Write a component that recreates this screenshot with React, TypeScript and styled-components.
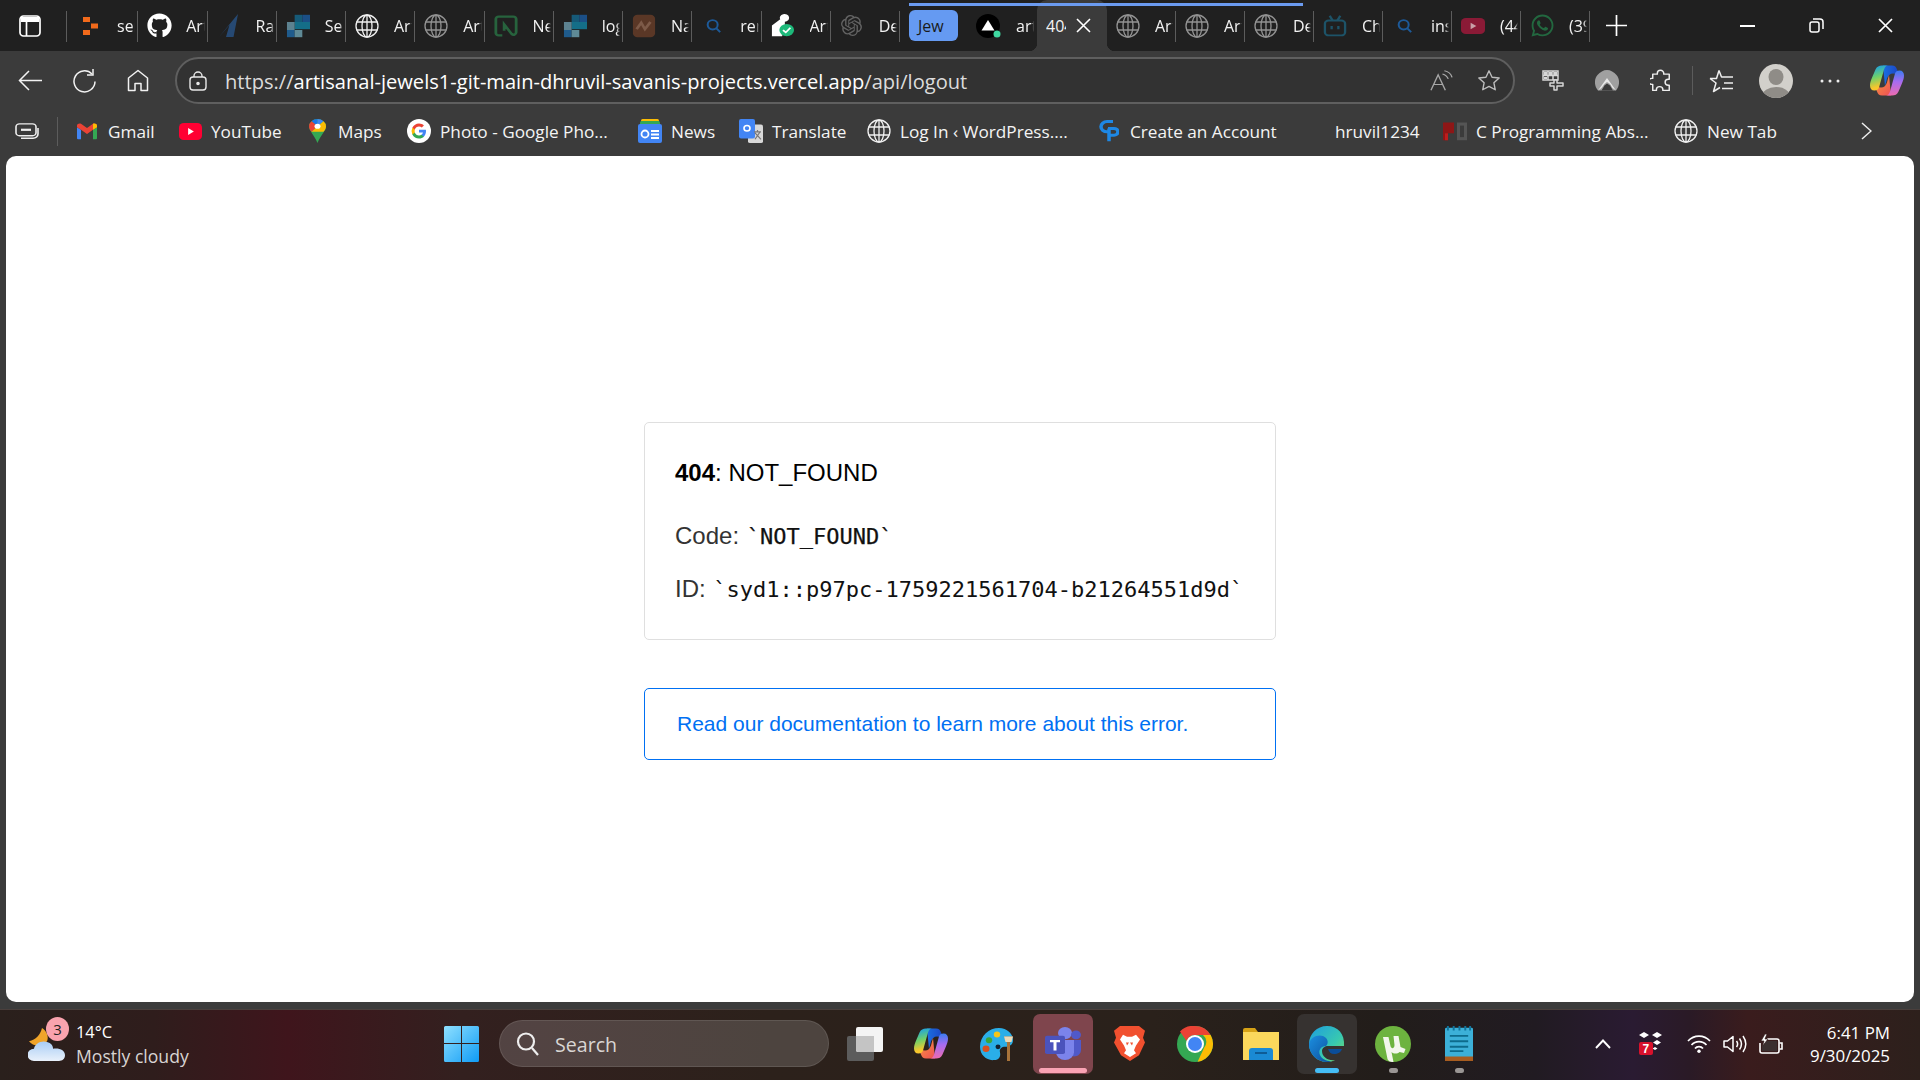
import React from "react";
import styled, { createGlobalStyle } from "styled-components";
import { FaGithub, FaWhatsapp } from "react-icons/fa";
import { SiOpenai } from "react-icons/si";

const Global = createGlobalStyle`
  html, body { margin: 0; padding: 0; width: 1920px; height: 1080px; overflow: hidden; background: #3b3b3b; }
  #root { width: 1920px; height: 1080px; }
  * { box-sizing: border-box; }
`;

const UI = `"Open Sans", "Noto Sans", sans-serif`;

const Screen = styled.div`
  width: 1920px;
  height: 1080px;
  display: flex;
  flex-direction: column;
  font-family: ${UI};
  background: #3b3b3b;
  color: #fff;
`;

/* ---------- tab strip ---------- */
const TabStrip = styled.div`
  height: 51px;
  flex: none;
  background: #202020;
  display: flex;
  align-items: stretch;
`;
const SideToggle = styled.div`
  width: 69px;
  flex: none;
  display: flex;
  align-items: center;
  padding-left: 19px;
  position: relative;
  &::after {
    content: "";
    position: absolute;
    right: 2px;
    top: 11px;
    height: 31px;
    width: 1px;
    background: #5c5c5c;
  }
`;
const Tab = styled.div<{ $w?: number; $plain?: boolean }>`
  width: ${(p) => p.$w ?? 69.25}px;
  flex: none;
  display: flex;
  align-items: center;
  padding-left: 8px;
  position: relative;
  overflow: hidden;
  &::after {
    content: "";
    display: ${(p) => (p.$plain ? "none" : "block")};
    position: absolute;
    right: 0;
    top: 11px;
    height: 31px;
    width: 1px;
    background: #5c5c5c;
  }
`;
const FavSlot = styled.span<{ $dim?: boolean }>`
  width: 26px;
  height: 26px;
  flex: none;
  display: flex;
  align-items: center;
  justify-content: center;
  opacity: ${(p) => (p.$dim ? 0.55 : 1)};
`;
const TabLabel = styled.span`
  margin-left: 14px;
  margin-right: 3px;
  font-size: 16px;
  color: #f2f2f2;
  white-space: nowrap;
  overflow: hidden;
  flex: 1;
  min-width: 0;
  -webkit-mask-image: linear-gradient(to right, #000 82%, transparent 100%);
  mask-image: linear-gradient(to right, #000 82%, transparent 100%);
`;
const Group = styled.div`
  display: flex;
  margin-left: 9px;
  position: relative;
  &::before {
    content: "";
    position: absolute;
    left: 0;
    right: 11px;
    top: 3px;
    height: 3px;
    background: #6b9bf0;
    z-index: 2;
  }
`;
const GroupChip = styled.div`
  width: 49px;
  height: 31px;
  margin-top: 10px;
  background: #659af2;
  border-radius: 6px;
  color: #1a1a1a;
  font-size: 16px;
  line-height: 33px;
  padding-left: 9px;
  flex: none;
  overflow: hidden;
`;
const ActiveTab = styled.div`
  width: 70px;
  flex: none;
  background: #3b3b3b;
  border-radius: 10px 10px 0 0;
  display: flex;
  align-items: center;
  padding-left: 9px;
  position: relative;
  font-size: 16px;
  &::before, &::after {
    content: "";
    position: absolute;
    bottom: 0;
    width: 8px;
    height: 8px;
  }
  &::before { left: -8px; background: radial-gradient(circle at 0 0, transparent 8px, #3b3b3b 8.5px); }
  &::after { right: -8px; background: radial-gradient(circle at 100% 0, transparent 8px, #3b3b3b 8.5px); }
`;
const ActiveLabel = styled.span`
  width: 20px;
  overflow: hidden;
  white-space: nowrap;
  color: #f4f4f4;
`;
const CloseX = styled.span`
  margin-left: 10px;
  display: flex;
`;
const NewTab = styled.div`
  width: 52px;
  flex: none;
  display: flex;
  align-items: center;
  justify-content: center;
`;
const StripSpacer = styled.div`
  flex: 1;
`;
const WinBtn = styled.div`
  width: 69px;
  flex: none;
  display: flex;
  align-items: center;
  justify-content: center;
`;

/* ---------- toolbar ---------- */
const Toolbar = styled.div`
  height: 57px;
  flex: none;
  display: flex;
  align-items: flex-start;
  padding: 6px 0 0 3px;
  background: #3b3b3b;
`;
const ToolBtn = styled.div<{ $w?: number }>`
  width: ${(p) => p.$w ?? 54}px;
  height: 47px;
  flex: none;
  display: flex;
  align-items: center;
  justify-content: center;
`;
const AddressBar = styled.div`
  width: 1340px;
  height: 47px;
  margin: 0 10.5px 0 10px;
  flex: none;
  border: 2px solid #5f5f5f;
  border-radius: 24px;
  background: #323232;
  display: flex;
  align-items: center;
  padding-left: 12px;
`;
const Url = styled.div`
  margin-left: 18px;
  padding-top: 1px;
  flex: 1;
  font-family: "Open Sans", sans-serif;
  font-size: 20.1px;
  color: #dcdcdc;
  white-space: nowrap;
  b { font-weight: 400; color: #fff; }
`;
const BarIcon = styled.span<{ $w: number }>`
  width: ${(p) => p.$w}px;
  flex: none;
  display: flex;
  justify-content: center;
`;
const ToolSep = styled.div`
  width: 1px;
  height: 29px;
  margin: 9px 2px 0 4px;
  background: #5c5c5c;
  flex: none;
`;

/* ---------- bookmarks ---------- */
const Bookmarks = styled.div`
  height: 48px;
  flex: none;
  display: flex;
  align-items: center;
  padding: 0 0 2px 15px;
  background: #3b3b3b;
`;
const CollectionSep = styled.div`
  width: 1px;
  height: 29px;
  margin: 0 17px 0 18px;
  background: #5c5c5c;
  flex: none;
`;
const Mark = styled.div<{ $w: number }>`
  width: ${(p) => p.$w}px;
  flex: none;
  display: flex;
  align-items: center;
  gap: 9px;
  font-size: 17.2px;
  color: #f4f4f4;
  white-space: nowrap;
`;
const MarkIcon = styled.span`
  width: 24px;
  height: 26px;
  flex: none;
  display: flex;
  align-items: center;
  justify-content: center;
`;
const Chevron = styled.div`
  margin-left: auto;
  margin-right: 48px;
  display: flex;
`;

/* ---------- page ---------- */
const Page = styled.main`
  height: 846px;
  flex: none;
  margin: 0 6px;
  background: #fff;
  border-radius: 10px;
  display: flex;
  flex-direction: column;
  align-items: center;
  justify-content: center;
  padding-top: 23px;
  font-family: "Liberation Sans", Arial, sans-serif;
`;
const ErrorCard = styled.section`
  width: 632px;
  height: 218px;
  border: 1px solid #dfdfdf;
  border-radius: 5px;
  padding: 32px 30px 0;
`;
const ErrorTitle = styled.h1`
  margin: 0;
  font-size: 24px;
  line-height: 36px;
  font-weight: 400;
  color: #000;
  strong { font-weight: 700; }
`;
const ErrorRow = styled.p<{ $top: number }>`
  margin: ${(p) => p.$top}px 0 0;
  font-size: 24px;
  line-height: 36px;
  color: #333;
  white-space: nowrap;
`;
const Mono = styled.code<{ $strong?: boolean }>`
  font-family: "DejaVu Sans Mono", monospace;
  font-size: 22px;
  color: #111;
  margin-left: 1px;
  -webkit-text-stroke: ${(p) => (p.$strong ? "0.25px #111" : "0")};
`;
const DocBox = styled.a`
  width: 632px;
  height: 72px;
  margin-top: 48px;
  border: 1.5px solid #0070f3;
  border-radius: 5px;
  padding-left: 32px;
  display: flex;
  align-items: center;
  font-size: 21px;
  color: #0070f3;
  text-decoration: none;
`;

/* ---------- taskbar ---------- */
const GapStrip = styled.div`
  height: 7px;
  flex: none;
  background: #3b3b3b;
`;
const Taskbar = styled.footer`
  height: 71px;
  flex: none;
  display: flex;
  align-items: center;
  padding-bottom: 3px;
  border-top: 1px solid #4a3f3c;
  background: linear-gradient(90deg, #2a201c 0%, #2f1d1c 8%, #3f151c 15%, #33201f 24%, #2c211b 40%, #2a211b 60%, #221d1a 72%, #211b22 80%, #2a1b32 85%, #2a1a26 88%, #3a1c1d 91%, #2d201c 100%);
`;
const Weather = styled.div`
  width: 444px;
  flex: none;
  display: flex;
  align-items: center;
  padding-left: 28px;
  gap: 10px;
`;
const WeatherIcon = styled.div`
  position: relative;
  width: 38px;
  height: 36px;
  flex: none;
`;
const Badge = styled.span`
  position: absolute;
  top: -9px;
  right: -3px;
  width: 23px;
  height: 24px;
  border-radius: 50%;
  background: #f9a3ae;
  color: #222;
  font-size: 15px;
  line-height: 24px;
  text-align: center;
`;
const WeatherText = styled.div`
  display: flex;
  flex-direction: column;
  font-size: 16.4px;
  line-height: 24px;
  color: #fff;
`;
const WeatherSub = styled.span`
  font-size: 17.6px;
  color: #d8d4d2;
`;
const StartBtn = styled.div`
  width: 55px;
  flex: none;
  display: flex;
  align-items: center;
`;
const SearchPill = styled.div`
  width: 330px;
  height: 47px;
  flex: none;
  border-radius: 24px;
  background: rgba(255, 255, 255, 0.16);
  border: 1px solid rgba(255, 255, 255, 0.1);
  display: flex;
  align-items: center;
  padding: 1px 0 0 16px;
  gap: 15px;
  font-size: 19.6px;
  color: #d9d6d4;
`;
const Apps = styled.div`
  display: flex;
  margin-left: 3px;
`;
const AppItem = styled.div`
  width: 66px;
  height: 60px;
  flex: none;
  display: flex;
  align-items: center;
  justify-content: center;
  position: relative;
`;
const AppTile = styled.div<{ $bg: string }>`
  position: absolute;
  left: 3px;
  top: 0;
  width: 60px;
  height: 60px;
  border-radius: 7px;
  background: ${(p) => p.$bg};
`;
const Indicator = styled.span<{ $c: string; $w: number }>`
  position: absolute;
  left: 50%;
  bottom: 1px;
  width: ${(p) => p.$w}px;
  height: 5px;
  margin-left: ${(p) => -p.$w / 2}px;
  border-radius: 3px;
  background: ${(p) => p.$c};
`;
const AppIcon = styled.span`
  position: relative;
  display: flex;
`;
const Tray = styled.div`
  margin-left: auto;
  display: flex;
  align-items: center;
  padding-right: 30px;
`;
const TrayIcon = styled.span<{ $w: number }>`
  width: ${(p) => p.$w}px;
  flex: none;
  display: flex;
  justify-content: center;
  svg { flex: none; }
`;
const Clock = styled.div`
  width: 93px;
  display: flex;
  flex-direction: column;
  align-items: flex-end;
  font-size: 16.9px;
  line-height: 23px;
  color: #fff;
  white-space: nowrap;
`;

/* ---------- icons ---------- */
const Globe = ({ s = 24, c = "#f0f0f0" }: { s?: number; c?: string }) => (
  <svg width={s} height={s} viewBox="0 0 24 24" fill="none" stroke={c} strokeWidth="1.3">
    <circle cx="12" cy="12" r="11" />
    <ellipse cx="12" cy="12" rx="5" ry="11" />
    <path d="M1.5 8h21M1.5 16h21M12 1v22" />
  </svg>
);
const OrangeDots = () => (
  <svg width="15" height="18" viewBox="0 0 15 18" fill="#f26a1b">
    <rect x="0" y="0" width="7" height="5" />
    <rect x="8" y="6.500" width="7" height="5" />
    <rect x="0" y="13" width="7" height="5" />
  </svg>
);
const RaLogo = () => (
  <svg width="21" height="24" viewBox="0 0 21 24">
    <path d="M20 0 L15.500 23 L8 23 L11.500 11 L1 23 Z" fill="#2c6cb8" />
  </svg>
);
const Squares = () => (
  <svg width="24" height="24" viewBox="0 0 25 30" preserveAspectRatio="none">
    <rect x="9" y="1" width="8" height="9" fill="#165a78" />
    <rect x="17" y="1" width="8" height="9" fill="#1b4f86" />
    <rect x="9" y="10" width="16" height="9" fill="#146e88" />
    <rect x="1" y="10" width="8" height="10" fill="#5d8290" />
    <rect x="1" y="20" width="8" height="9" fill="#1f5b8c" />
    <rect x="9" y="20" width="8" height="9" fill="#5f8a96" />
  </svg>
);
const NLogo = () => (
  <svg width="24" height="22" viewBox="0 0 26 28" fill="none" stroke="#2d9b56" strokeWidth="3" preserveAspectRatio="none">
    <path d="M9 26H5a3 3 0 0 1-3-3V5a3 3 0 0 1 3-3h16a3 3 0 0 1 3 3v17c0 3-3 4-5 2l-8-12v8" />
  </svg>
);
const NaLogo = () => (
  <svg width="24" height="24" viewBox="0 0 26 30" preserveAspectRatio="none">
    <rect x="1" y="1" width="24" height="28" rx="5" fill="#8b4a2b" />
    <path d="M5 19 L10 11 L14 19 L20 10" stroke="#c98a6a" strokeWidth="3" fill="none" />
  </svg>
);
const Magnifier = ({ c = "#1d5a99" }: { c?: string }) => (
  <svg width="15" height="14" viewBox="0 0 18 18" fill="none" stroke={c} strokeWidth="2.400" preserveAspectRatio="none">
    <circle cx="8" cy="7.500" r="6" />
    <path d="M12.500 12l4.500 5" />
  </svg>
);
const CheckShield = () => (
  <svg width="24" height="23" viewBox="0 0 26 30" preserveAspectRatio="none">
    <path d="M1 29V15l9-8a5 5 0 1 1 5 3v8l-3 11z" fill="#fff" />
    <circle cx="17" cy="21" r="8" fill="#1db97a" />
    <path d="M13 21l3 3 5-6" stroke="#fff" strokeWidth="2" fill="none" />
  </svg>
);
const Vercel = () => (
  <svg width="26" height="24" viewBox="0 0 26 24">
    <circle cx="12" cy="12" r="12" fill="#000" />
    <path d="M12 6l6.500 10.500H5.500z" fill="#fff" />
    <circle cx="21" cy="20" r="3.500" fill="#3fd8a0" />
  </svg>
);
const Bili = () => (
  <svg width="24" height="22" viewBox="0 0 25 28" fill="none" stroke="#1b7da3" strokeWidth="2.400" preserveAspectRatio="none">
    <rect x="2" y="7" width="21" height="19" rx="4" />
    <path d="M7 1l3 6M18 1l-3 6M9 14v4M16 14v4" />
  </svg>
);
const YtDark = () => (
  <svg width="24" height="16" viewBox="0 0 25 20" preserveAspectRatio="none">
    <rect width="25" height="20" rx="5" fill="#8a1a36" />
    <path d="M10 6l6 4-6 4z" fill="#c9a0a8" />
  </svg>
);
const SideIcon = () => (
  <svg width="22" height="22" viewBox="0 0 22 22" fill="none" stroke="#fff" strokeWidth="1.700">
    <rect x="1" y="1" width="20" height="20" rx="3.500" />
    <path d="M7.500 7v14" />
    <path d="M2 2h18v5H2z" fill="#fff" stroke="none" />
  </svg>
);
const Back = () => (
  <svg width="24" height="21" viewBox="0 0 24 21" fill="none" stroke="#f2f2f2" strokeWidth="1.500">
    <path d="M24 10.500H1.500M11 1L1.500 10.500 11 20" />
  </svg>
);
const Reload = () => (
  <svg width="24" height="24" viewBox="0 0 24 24" fill="none" stroke="#f2f2f2" strokeWidth="1.500">
    <path d="M20 5a10.500 10.500 0 1 0 3 7.500" />
    <path d="M21 0v6h-6" />
  </svg>
);
const Home = () => (
  <svg width="22" height="23" viewBox="0 0 22 23" fill="none" stroke="#f2f2f2" strokeWidth="1.500">
    <path d="M1.500 21.500V9L11 1.500 20.500 9v12.500h-6.500v-7H8v7z" strokeLinejoin="round" />
  </svg>
);
const Lock = () => (
  <svg width="18" height="20" viewBox="0 0 18 20" fill="none" stroke="#e8e8e8" strokeWidth="1.400">
    <rect x="1" y="6" width="16" height="13" rx="3" />
    <path d="M5 6V5a4 4 0 0 1 8 0v1" />
    <circle cx="9" cy="12.500" r="1.100" fill="#e8e8e8" />
  </svg>
);
const ReadAloud = () => (
  <svg width="23" height="21" viewBox="0 0 24 26" fill="none" stroke="#a8a8a8" strokeWidth="1.400" preserveAspectRatio="none">
    <path d="M1 25L8.500 6 16 25M3.800 18h9.500" />
    <path d="M13 5c3 1 5 3 6 6M15 1c4 1 7 4 8 8" />
  </svg>
);
const Star = ({ c = "#bdbdbd" }: { c?: string }) => (
  <svg width="24" height="23" viewBox="0 0 26 26" fill="none" stroke={c} strokeWidth="1.500" preserveAspectRatio="none">
    <path d="M13 2l3.300 7.300 7.700.9-5.700 5.400 1.500 7.900L13 19.600l-6.800 3.900 1.500-7.900L2 10.200l7.700-.9z" strokeLinejoin="round" />
  </svg>
);
const ExtGrid = () => (
  <svg width="22" height="21" viewBox="0 0 22 21" fill="none" stroke="#d6d6d6" strokeWidth="1.500">
    <path d="M1 1h15v9H1z" fill="#3b3b3b" />
    <path d="M6 1v9M11 1v9M1 5.500h15" />
    <path d="M12 10v3H8v3h4v4h3v-4h6v-3h-6v-3z" fill="#3b3b3b" strokeLinejoin="round" />
    <path d="M2 2h3v3H2zM7 2h3v3H7zM12 2h3v3h-3zM2 7h3v2H2z" fill="#d6d6d6" stroke="none" />
  </svg>
);
const Arc = () => (
  <svg width="24" height="21" viewBox="0 0 24 21">
    <path d="M3 20.500C-1 16 -1 9 2.500 5 5 2 8.500 0 12 0s7 2 9.500 5C25 9 25 16 21 20.500z" fill="#a0a0a0" />
    <path d="M3 20.500L12 8l9 12.500-3.500-2.500L15 14l-3-2-2.500 2-3 4z" fill="#e8e8e8" />
    <path d="M6.500 20.500l3-5 2.500-2 3 2 3 5z" fill="#3b3b3b" />
  </svg>
);
const Puzzle = () => (
  <svg width="22" height="24" viewBox="0 0 24 28" fill="none" stroke="#eee" strokeWidth="1.600" preserveAspectRatio="none">
    <path d="M8 6V5a3.500 3.500 0 0 1 7 0v1h6v6h-1a3.500 3.500 0 0 0 0 7h1v6h-7v-1a3.500 3.500 0 0 0-7 0v1H3v-7H2a3.500 3.500 0 0 1 0-7h1V6z" strokeLinejoin="round" />
  </svg>
);
const Favs = () => (
  <svg width="25" height="24" viewBox="0 0 25 24" fill="none" stroke="#eee" strokeWidth="1.500">
    <path d="M10 1.500l2.500 6.500h11.500M1 9.500l6 4.500-2.500 8.500L11 18.500M1 9.500h6.500L10 1.500" strokeLinejoin="round" />
    <path d="M15 14h9M13 19.500h11" />
  </svg>
);
const Avatar = () => (
  <svg width="34" height="34" viewBox="0 0 34 34">
    <defs><clipPath id="av"><circle cx="17" cy="17" r="17" /></clipPath></defs>
    <g clipPath="url(#av)">
      <rect width="34" height="34" fill="#d2d0cb" />
      <ellipse cx="17" cy="13" rx="7.500" ry="8" fill="#8f8c87" />
      <ellipse cx="17" cy="32" rx="14" ry="9" fill="#8f8c87" />
    </g>
  </svg>
);
const CopilotMark = ({ id }: { id: string }) => (
  <svg width="34" height="31" viewBox="0 0 34 31">
    <defs>
      <linearGradient id={id + "a"} x1="0.300" y1="0" x2="0.500" y2="1">
        <stop offset="0" stopColor="#18a0e8" /><stop offset=".45" stopColor="#6fd06a" /><stop offset=".85" stopColor="#f8c62c" />
      </linearGradient>
      <linearGradient id={id + "b"} x1="0.500" y1="0" x2="0.500" y2="1">
        <stop offset="0" stopColor="#3a7cf0" /><stop offset=".45" stopColor="#a76cf0" /><stop offset="1" stopColor="#ec6cb0" />
      </linearGradient>
      <linearGradient id={id + "c"} x1="0" y1="0" x2="1" y2="0">
        <stop offset="0" stopColor="#1b6fe0" /><stop offset="1" stopColor="#1c3fc0" />
      </linearGradient>
      <linearGradient id={id + "d"} x1="0" y1="0" x2="1" y2="1">
        <stop offset="0" stopColor="#f8a23a" /><stop offset="1" stopColor="#ee4f55" />
      </linearGradient>
    </defs>
    <path d="M13 0.500h9c3 0 4 1.500 5 4l4 9c-2-3.500-5-5-8-5-3 0-5 2-6 5L15 21z" fill={`url(#${id}c)`} />
    <path d="M21 30.500h-9c-3 0-4-1.500-5-4l-4-9c2 3.500 5 5 8 5 3 0 5-2 6-5l2-7.500z" fill={`url(#${id}d)`} />
    <path d="M12 0.500h6c-2 0-3 1.500-4 4l-5 18c-.7 2-2 3-4.500 3-3 0-4.500-2-4.500-5 0-3 1-5.500 2.500-9l3-7c1.500-3 3.500-4 6.500-4z" fill={`url(#${id}a)`} />
    <path d="M22 30.500h-6c2 0 3-1.500 4-4l5-18c.7-2 2-3 4.500-3 3 0 4.500 2 4.500 5 0 3-1 5.500-2.500 9l-3 7c-1.500 3-3.500 4-6.500 4z" fill={`url(#${id}b)`} />
  </svg>
);
const Collections = () => (
  <svg width="24" height="17" viewBox="0 0 24 20" fill="none" stroke="#eee" strokeWidth="1.600" preserveAspectRatio="none">
    <rect x="1" y="1" width="20" height="14" rx="3.500" />
    <path d="M6 8h10" strokeWidth="2.600" />
    <path d="M23 6v7a5 5 0 0 1-5 5H6" />
  </svg>
);
const Gmail = () => (
  <svg width="22" height="17" viewBox="0 0 22 20" preserveAspectRatio="none">
    <path d="M1 5v13a1 1 0 0 0 1 1h3V8z" fill="#4285f4" />
    <path d="M21 5v13a1 1 0 0 1-1 1h-3V8z" fill="#34a853" />
    <path d="M1 3c0-2 2.500-3 4-2l6 5 6-5c1.500-1 4 0 4 2v2l-4 3-6 5-6-5-4-3z" fill="#ea4335" />
    <path d="M17 1c1.500-1 4 0 4 2v2l-4 3z" fill="#fbbc04" />
  </svg>
);
const Youtube = () => (
  <svg width="23" height="17" viewBox="0 0 24 20" preserveAspectRatio="none">
    <rect width="24" height="20" rx="5" fill="#ff0033" />
    <path d="M9.500 6l6 4-6 4z" fill="#fff" />
  </svg>
);
const MapsPin = () => (
  <svg width="17" height="24" viewBox="0 0 17 28" preserveAspectRatio="none">
    <path d="M8.500 0A8.500 8.500 0 0 0 0 8.500C0 14 5 18 8.500 28 12 18 17 14 17 8.500A8.500 8.500 0 0 0 8.500 0z" fill="#34a853" />
    <path d="M8.500 0A8.500 8.500 0 0 0 2.500 2.500L8.500 8.500z" fill="#1a73e8" />
    <path d="M2.500 2.500A8.500 8.500 0 0 0 0 8.500C0 11 1 13 2.500 15L8.500 8.500z" fill="#ea4335" />
    <path d="M8.500 0a8.500 8.500 0 0 1 6 2.500L8.500 8.500z" fill="#4285f4" />
    <path d="M2.500 15L14.500 2.500A8.500 8.500 0 0 1 17 8.500c0 2.500-1 4.500-2.500 6.500z" fill="#fbbc04" />
    <circle cx="8.500" cy="8.500" r="3" fill="#fff" />
  </svg>
);
const GoogleG = () => (
  <svg width="24" height="24" viewBox="0 0 48 48">
    <circle cx="24" cy="24" r="24" fill="#fff" />
    <path d="M38 24.500c0-1-.1-2-.3-3H24v5.700h7.900c-.4 1.900-1.400 3.400-3 4.500v3.700h4.800C36.400 32.800 38 29 38 24.500z" fill="#4285f4" />
    <path d="M24 39c4 0 7.400-1.300 9.800-3.600l-4.800-3.700c-1.300.9-3 1.400-5 1.400-3.900 0-7.100-2.600-8.300-6.100h-5v3.800C13.200 35.700 18.200 39 24 39z" fill="#34a853" />
    <path d="M15.700 27c-.6-1.900-.6-3.900 0-5.800v-3.800h-5a15 15 0 0 0 0 13.400z" fill="#fbbc04" />
    <path d="M24 15c2.200 0 4.100.8 5.600 2.200l4.200-4.200C31.300 10.600 27.900 9.200 24 9.200c-5.800 0-10.800 3.300-13.300 8.200l5 3.800c1.200-3.600 4.400-6.200 8.300-6.200z" fill="#ea4335" />
  </svg>
);
const NewsIcon = () => (
  <svg width="24" height="24" viewBox="0 0 24 24">
    <rect x="3" y="0" width="18" height="8" rx="1.500" fill="#fbbc04" />
    <rect x="2" y="2" width="20" height="8" rx="1.500" fill="#34a853" />
    <rect x="0" y="5" width="24" height="19" rx="2" fill="#4285f4" />
    <circle cx="7" cy="15" r="3.500" fill="none" stroke="#fff" strokeWidth="1.800" />
    <path d="M13 12h8M13 15.500h8M13 19h8" stroke="#fff" strokeWidth="1.800" />
  </svg>
);
const TranslateIcon = () => (
  <svg width="24" height="24" viewBox="0 0 24 26" preserveAspectRatio="none">
    <rect x="9" y="6" width="15" height="20" rx="2" fill="#d8d8d8" />
    <rect x="0" y="0" width="16" height="21" rx="2" fill="#4285f4" />
    <circle cx="8" cy="10" r="3" fill="none" stroke="#fff" strokeWidth="1.600" />
    <path d="M15 14h7M18.500 12v2M16 22l5-8M16 15l6 7" stroke="#777" strokeWidth="1.200" />
  </svg>
);
const GpLogo = () => (
  <svg width="20" height="24" viewBox="0 0 20 28" fill="none" stroke="#1e88e5" strokeWidth="3.500" preserveAspectRatio="none">
    <path d="M14 3H8a6 6 0 0 0 0 12h2" />
    <path d="M9 11h6a4 4 0 0 1 0 8h-4M10 11v15" />
  </svg>
);
const PdLogo = () => (
  <svg width="24" height="20" viewBox="0 0 24 26" preserveAspectRatio="none">
    <path d="M0 2h11v14H5v9H0z" fill="#8e1616" />
    <path d="M2 16h3v9H2z" fill="#c01c1c" />
    <path d="M14 2h10v23H14z" fill="#555" />
    <path d="M17 6h4v15h-4z" fill="#3b3b3b" />
  </svg>
);
const WinLogo = () => (
  <svg width="35" height="36" viewBox="0 0 35 36">
    <defs>
      <linearGradient id="wn" x1="0" y1="0" x2="1" y2="1">
        <stop offset="0" stopColor="#8fe0ff" /><stop offset="1" stopColor="#0f9bf5" />
      </linearGradient>
    </defs>
    <path d="M1.500 0H17v17H0V1.500A1.500 1.500 0 0 1 1.500 0zM18 0h15.500A1.500 1.500 0 0 1 35 1.500V17H18zM0 18h17v18H1.500A1.500 1.500 0 0 1 0 34.500zM18 18h17v16.500a1.500 1.500 0 0 1-1.500 1.500H18z" fill="url(#wn)" />
  </svg>
);
const SearchGlass = () => (
  <svg width="24" height="26" viewBox="0 0 24 26" fill="none" stroke="#eee" strokeWidth="2.200">
    <circle cx="10" cy="10.500" r="8" />
    <path d="M16 17l6 7" />
  </svg>
);
const CloudMoon = () => (
  <svg width="38" height="36" viewBox="0 0 38 38" preserveAspectRatio="none">
    <defs>
      <linearGradient id="cl" x1="0" y1="0" x2="0" y2="1">
        <stop offset="0" stopColor="#a9cdf5" /><stop offset="1" stopColor="#e9f1fb" />
      </linearGradient>
    </defs>
    <path d="M14 2C12 10 8 14 1 16c4 6 14 6 18 0 2-4 0-11-5-14z" fill="#f0a42a" />
    <path d="M6 37a6 6 0 0 1 0-13c1-6 8-9 13-7 4 1 6 4 6 7 7-1 12 2 12 7 0 4-3 6-6 6z" fill="url(#cl)" />
  </svg>
);
const TaskView = () => (
  <svg width="37" height="34" viewBox="0 0 37 34">
    <rect x="0" y="9" width="27" height="25" rx="2" fill="#5c5c5c" />
    <rect x="9" y="0" width="27" height="25" rx="2" fill="#f4f4f4" />
    <path d="M9 9h18v16H11a2 2 0 0 1-2-2z" fill="#c4c4c4" />
  </svg>
);
const Palette = () => (
  <svg width="34" height="34" viewBox="0 0 34 36" preserveAspectRatio="none">
    <path d="M19 1C9 1 0 9 0 21c0 9 7 15 14 14 5 0 7-4 6-8-1-4 2-6 5-6 4 0 8-2 8-7C33 7 27 1 19 1z" fill="#2aaee8" />
    <circle cx="9" cy="14" r="3.200" fill="#3aa53a" />
    <circle cx="17" cy="8" r="3.200" fill="#f5c518" />
    <circle cx="6" cy="23" r="3.500" fill="#d8501f" />
    <circle cx="18" cy="21" r="2.500" fill="#123" />
    <path d="M24 10h9l-3 7v19h-3V17z" fill="#a8733a" />
    <path d="M24 10h9l-1.500 6h-6z" fill="#ecd9b6" />
  </svg>
);
const Teams = () => (
  <svg width="36" height="33" viewBox="0 0 36 38" preserveAspectRatio="none">
    <circle cx="20" cy="7" r="7" fill="#7b83eb" />
    <circle cx="31" cy="9" r="5" fill="#5059c9" />
    <path d="M25 15h11v11c0 5-3 8-7 8-2 0-3-1-4-2z" fill="#5059c9" />
    <path d="M11 15h18v14a9 9 0 0 1-18 0z" fill="#7b83eb" />
    <rect x="0" y="10" width="20" height="21" rx="2" fill="#4b53bc" />
    <path d="M5 15h10v2.500h-3.500V27h-3v-9.500H5z" fill="#fff" />
  </svg>
);
const Brave = () => (
  <svg width="31" height="35" viewBox="0 0 31 36" preserveAspectRatio="none">
    <path d="M6 0h19l6 5-2 7 2 5-6 13-9 6-9-6L0 17l2-5-2-7z" fill="#f1502f" />
    <path d="M9 9l4 2h5l4-2 4 5-4 6-2 5 2 3-6 4-6-4 2-3-2-5-4-6z" fill="#fff" />
    <path d="M12 17h3l-2 3zM19 17h-3l2 3z" fill="#f1502f" />
  </svg>
);
const Chrome = () => (
  <svg width="36" height="36" viewBox="0 0 36 36">
    <circle cx="18" cy="18" r="18" fill="#34a853" />
    <path d="M18 0a18 18 0 0 1 15.600 9H18a9 9 0 0 0-8.500 6L3 5.500A18 18 0 0 1 18 0z" fill="#ea4335" />
    <path d="M33.600 9a18 18 0 0 1-13 26.800L27 22a9 9 0 0 0-1-13z" fill="#fbbc04" />
    <circle cx="18" cy="18" r="9" fill="#fff" />
    <circle cx="18" cy="18" r="7" fill="#4285f4" />
  </svg>
);
const Folder = () => (
  <svg width="36" height="32" viewBox="0 0 36 32">
    <path d="M0 2a2 2 0 0 1 2-2h10l3 4h-15z" fill="#d6a216" />
    <rect x="0" y="4" width="36" height="28" fill="#fbd85c" />
    <path d="M6 32v-9a3 3 0 0 1 3-3h18a3 3 0 0 1 3 3v9z" fill="#1a8ad4" />
    <rect x="12" y="24" width="12" height="2" fill="#0e5c96" />
  </svg>
);
const Edge = () => (
  <svg width="36" height="36" viewBox="0 0 36 36">
    <defs>
      <linearGradient id="ed" x1="0" y1="0" x2="1" y2="1">
        <stop offset="0" stopColor="#1d9de0" /><stop offset=".6" stopColor="#38c9b0" /><stop offset="1" stopColor="#7fe05f" />
      </linearGradient>
      <linearGradient id="ed2" x1="0" y1="0" x2="1" y2="1">
        <stop offset="0" stopColor="#1c8fe0" /><stop offset="1" stopColor="#0c4f9c" />
      </linearGradient>
    </defs>
    <path d="M18 0C8 0 0 8 0 18c0 10 8 18 18 18 3 0 6-1 8-2-7 1-13-3-13-9 0-3 3-5 6-5h16C36 8 29 0 18 0z" fill="url(#ed)" />
    <path d="M0 18c1-7 9-10 14-8 5 2 6 7 3 10-5 0-8 4-6 9 2 4 6 6 11 6-1 1-3 1-4 1C8 36 0 28 0 18z" fill="url(#ed2)" />
    <path d="M19 23h14c-1 3-4 5-8 5-3 0-5-2-6-5z" fill="#0b4d99" />
  </svg>
);
const UTorrent = () => (
  <svg width="36" height="36" viewBox="0 0 36 36">
    <circle cx="18" cy="18" r="18" fill="#6db33f" />
    <path d="M8 11h5.500l2 9c.6 3 4 3 4-1l-1-9h5l2 11 5 2-1.500 4-4.500-1c-2 2-6 2-8 0l2 10c-4 0-5-1-6-3z" fill="#f3f6ec" />
  </svg>
);
const Notepad = () => (
  <svg width="28" height="35" viewBox="0 0 29 39" preserveAspectRatio="none">
    <rect x="0" y="2" width="29" height="37" rx="1.500" fill="#3cb0d8" />
    <rect x="0" y="34" width="29" height="5" fill="#a85d20" />
    <path d="M3 0v5M9 0v5M15 0v5M21 0v5M26 0v5" stroke="#10749c" strokeWidth="2" />
    <path d="M5 11h19M5 17h19M5 23h19M5 28h14" stroke="#0d6b8c" strokeWidth="2.200" />
  </svg>
);
const TrayChevron = () => (
  <svg width="16" height="10" viewBox="0 0 16 10" fill="none" stroke="#fff" strokeWidth="1.900">
    <path d="M1 9l7-7.500L15 9" />
  </svg>
);
const Dropbox = () => (
  <svg width="23" height="23" viewBox="0 0 23 23">
    <path d="M5 0l5 3-5 3-5-3zM18 0l5 3-5 3-5-3zM18 8l4 2.500-4 2.500-4-2.500zM16 15l2.500 1.500-2.500 1.500-2.500-1.500z" fill="#fff" />
    <rect x="0" y="10" width="14" height="13" rx="2" fill="#d8112c" />
    <text x="3.500" y="21" fontSize="12" fontFamily="Liberation Sans" fontWeight="700" fill="#fff">7</text>
  </svg>
);
const Wifi = () => (
  <svg width="24" height="18" viewBox="0 0 24 18" fill="none" stroke="#fff" strokeWidth="1.700">
    <path d="M1 6c6-6.500 16-6.500 22 0M4.500 10c4-4.500 11-4.500 15 0M8 13.500c2-2.500 6-2.500 8 0" />
    <circle cx="12" cy="16.200" r="1.700" fill="#fff" stroke="none" />
  </svg>
);
const Volume = () => (
  <svg width="24" height="18" viewBox="0 0 24 18" fill="none" stroke="#fff" strokeWidth="1.500">
    <path d="M1 6h3.500L10 1.500v15L4.500 12H1z" strokeLinejoin="round" />
    <path d="M13.500 6c1.500 2 1.500 4 0 6M16.500 3.500c2.500 3.500 2.500 7.500 0 11M20 1c3.500 5 3.500 11 0 16" />
  </svg>
);
const Battery = () => (
  <svg width="24" height="20" viewBox="0 0 24 20" fill="none" stroke="#fff" strokeWidth="1.600">
    <path d="M8 5h10a2 2 0 0 1 2 2v10a2 2 0 0 1-2 2H3a2 2 0 0 1-2-2V9" />
    <path d="M20.500 9H23v6h-2.500" />
    <path d="M8 7h10v10H3V11z" fill="#3b3030" stroke="none" />
    <path d="M6 0L2 7h3L3.500 12 9 5H6l2-5z" fill="#fff" stroke="#33201f" strokeWidth=".7" />
  </svg>
);

type TabInfo = { icon: React.ReactNode; label: string; dim?: boolean };
const firstTabs: TabInfo[] = [
  { icon: <OrangeDots />, label: "server" },
  { icon: <FaGithub size={25} color="#fff" />, label: "Artisanal" },
  { icon: <RaLogo />, label: "Razorpay", dim: true },
  { icon: <Squares />, label: "Search" },
  { icon: <Globe s={24} />, label: "Artisanal" },
  { icon: <Globe s={24} />, label: "Artisanal", dim: true },
  { icon: <NLogo />, label: "Neon", dim: true },
  { icon: <Squares />, label: "login" },
  { icon: <NaLogo />, label: "Namecheap", dim: true },
  { icon: <Magnifier />, label: "render" },
  { icon: <CheckShield />, label: "Artisanal" },
  { icon: <SiOpenai size={21} color="#9a9a9a" />, label: "Deploy", dim: true },
];
const lastTabs: TabInfo[] = [
  { icon: <Globe s={24} />, label: "Artisanal", dim: true },
  { icon: <Globe s={24} />, label: "Artisanal", dim: true },
  { icon: <Globe s={24} />, label: "Deploy", dim: true },
  { icon: <Bili />, label: "Chat", dim: true },
  { icon: <Magnifier />, label: "instagram" },
  { icon: <YtDark />, label: "(44) You" },
  { icon: <FaWhatsapp size={25} color="#25a35a" />, label: "(39) Wh", dim: true },
];

const marks: { w: number; icon: React.ReactNode; label: string }[] = [
  { w: 103, icon: <Gmail />, label: "Gmail" },
  { w: 127, icon: <Youtube />, label: "YouTube" },
  { w: 102, icon: <MapsPin />, label: "Maps" },
  { w: 231, icon: <GoogleG />, label: "Photo - Google Pho..." },
  { w: 101, icon: <NewsIcon />, label: "News" },
  { w: 128, icon: <TranslateIcon />, label: "Translate" },
  { w: 230, icon: <Globe />, label: "Log In ‹ WordPress...." },
  { w: 238, icon: <GpLogo />, label: "Create an Account" },
];

const App = () => (
  <Screen>
    <Global />
    <TabStrip>
      <SideToggle>
        <SideIcon />
      </SideToggle>
      {firstTabs.map((t, i) => (
        <Tab key={i}>
          <FavSlot $dim={t.dim}>{t.icon}</FavSlot>
          <TabLabel>{t.label}</TabLabel>
        </Tab>
      ))}
      <Group>
        <GroupChip>Jew</GroupChip>
        <Tab $w={79} $plain>
          <FavSlot style={{ marginLeft: 10 }}>
            <Vercel />
          </FavSlot>
          <TabLabel>artisanal</TabLabel>
        </Tab>
        <ActiveTab>
          <ActiveLabel>404</ActiveLabel>
          <CloseX>
            <svg width="15" height="15" viewBox="0 0 15 15" stroke="#fff" strokeWidth="1.600">
              <path d="M1 1l13 13M14 1L1 14" />
            </svg>
          </CloseX>
        </ActiveTab>
        {lastTabs.slice(0, 3).map((t, i) => (
          <Tab key={i} $w={69}>
            <FavSlot $dim={t.dim}>{t.icon}</FavSlot>
            <TabLabel>{t.label}</TabLabel>
          </Tab>
        ))}
      </Group>
      {lastTabs.slice(3).map((t, i) => (
        <Tab key={i} $w={69}>
          <FavSlot $dim={t.dim}>{t.icon}</FavSlot>
          <TabLabel>{t.label}</TabLabel>
        </Tab>
      ))}
      <NewTab>
        <svg width="21" height="21" viewBox="0 0 21 21" stroke="#fff" strokeWidth="1.700">
          <path d="M10.500 0v21M0 10.500h21" />
        </svg>
      </NewTab>
      <StripSpacer />
      <WinBtn>
        <svg width="15" height="2" viewBox="0 0 15 2"><rect width="15" height="2" fill="#fff" /></svg>
      </WinBtn>
      <WinBtn>
        <svg width="15" height="15" viewBox="0 0 15 15" fill="none" stroke="#fff" strokeWidth="1.500">
          <rect x="1" y="4" width="9" height="10" rx="2" />
          <path d="M4 1h7a3 3 0 0 1 3 3v7" />
        </svg>
      </WinBtn>
      <WinBtn>
        <svg width="15" height="15" viewBox="0 0 15 15" stroke="#fff" strokeWidth="1.700">
          <path d="M1 1l13 13M14 1L1 14" />
        </svg>
      </WinBtn>
    </TabStrip>

    <Toolbar>
      <ToolBtn><Back /></ToolBtn>
      <ToolBtn><Reload /></ToolBtn>
      <ToolBtn><Home /></ToolBtn>
      <AddressBar>
        <Lock />
        <Url>
          https://<b>artisanal-jewels1-git-main-dhruvil-savanis-projects.vercel.app</b>/api/logout
        </Url>
        <BarIcon $w={48}><ReadAloud /></BarIcon>
        <BarIcon $w={48}><Star /></BarIcon>
      </AddressBar>
      <ToolBtn><ExtGrid /></ToolBtn>
      <ToolBtn><Arc /></ToolBtn>
      <ToolBtn><Puzzle /></ToolBtn>
      <ToolSep />
      <ToolBtn><Favs /></ToolBtn>
      <ToolBtn><Avatar /></ToolBtn>
      <ToolBtn>
        <svg width="20" height="4" viewBox="0 0 20 4" fill="#eee">
          <circle cx="2" cy="2" r="1.500" /><circle cx="10" cy="2" r="1.500" /><circle cx="18" cy="2" r="1.500" />
        </svg>
      </ToolBtn>
      <ToolBtn $w={60}><CopilotMark id="cp1" /></ToolBtn>
    </Toolbar>

    <Bookmarks>
      <Collections />
      <CollectionSep />
      {marks.map((m) => (
        <Mark key={m.label} $w={m.w}>
          <MarkIcon>{m.icon}</MarkIcon>
          {m.label}
        </Mark>
      ))}
      <Mark $w={108}>hruvil1234</Mark>
      <Mark $w={231}>
        <MarkIcon><PdLogo /></MarkIcon>
        C Programming Abs...
      </Mark>
      <Mark $w={100}>
        <MarkIcon><Globe /></MarkIcon>
        New Tab
      </Mark>
      <Chevron>
        <svg width="11" height="18" viewBox="0 0 11 18" fill="none" stroke="#eee" strokeWidth="1.500">
          <path d="M1 1l9 8-9 8" />
        </svg>
      </Chevron>
    </Bookmarks>

    <Page>
      <ErrorCard>
        <ErrorTitle>
          <strong>404</strong>: NOT_FOUND
        </ErrorTitle>
        <ErrorRow $top={27}>
          Code: <Mono $strong>`NOT_FOUND`</Mono>
        </ErrorRow>
        <ErrorRow $top={16}>
          ID: <Mono>`syd1::p97pc-1759221561704-b21264551d9d`</Mono>
        </ErrorRow>
      </ErrorCard>
      <DocBox href="#">Read our documentation to learn more about this error.</DocBox>
    </Page>

    <GapStrip />

    <Taskbar>
      <Weather>
        <WeatherIcon>
          <CloudMoon />
          <Badge>3</Badge>
        </WeatherIcon>
        <WeatherText>
          <span>14°C</span>
          <WeatherSub>Mostly cloudy</WeatherSub>
        </WeatherText>
      </Weather>
      <StartBtn><WinLogo /></StartBtn>
      <SearchPill>
        <SearchGlass />
        Search
      </SearchPill>
      <Apps>
        <AppItem><AppIcon><TaskView /></AppIcon></AppItem>
        <AppItem><AppIcon><CopilotMark id="cp2" /></AppIcon></AppItem>
        <AppItem><AppIcon><Palette /></AppIcon></AppItem>
        <AppItem>
          <AppTile $bg="#7f454d" />
          <AppIcon><Teams /></AppIcon>
          <Indicator $c="#f9a3b4" $w={48} />
        </AppItem>
        <AppItem><AppIcon><Brave /></AppIcon></AppItem>
        <AppItem><AppIcon><Chrome /></AppIcon></AppItem>
        <AppItem><AppIcon><Folder /></AppIcon></AppItem>
        <AppItem>
          <AppTile $bg="#363230" />
          <AppIcon><Edge /></AppIcon>
          <Indicator $c="#45bdf5" $w={24} />
        </AppItem>
        <AppItem>
          <AppIcon><UTorrent /></AppIcon>
          <Indicator $c="#9a9694" $w={9} />
        </AppItem>
        <AppItem>
          <AppIcon><Notepad /></AppIcon>
          <Indicator $c="#9a9694" $w={9} />
        </AppItem>
      </Apps>
      <Tray>
        <TrayIcon $w={48}><TrayChevron /></TrayIcon>
        <TrayIcon $w={46}><Dropbox /></TrayIcon>
        <TrayIcon $w={52}><Wifi /></TrayIcon>
        <TrayIcon $w={20}><Volume /></TrayIcon>
        <TrayIcon $w={52}><Battery /></TrayIcon>
        <Clock>
          <span>6:41 PM</span>
          <span>9/30/2025</span>
        </Clock>
      </Tray>
    </Taskbar>
  </Screen>
);

export default App;
